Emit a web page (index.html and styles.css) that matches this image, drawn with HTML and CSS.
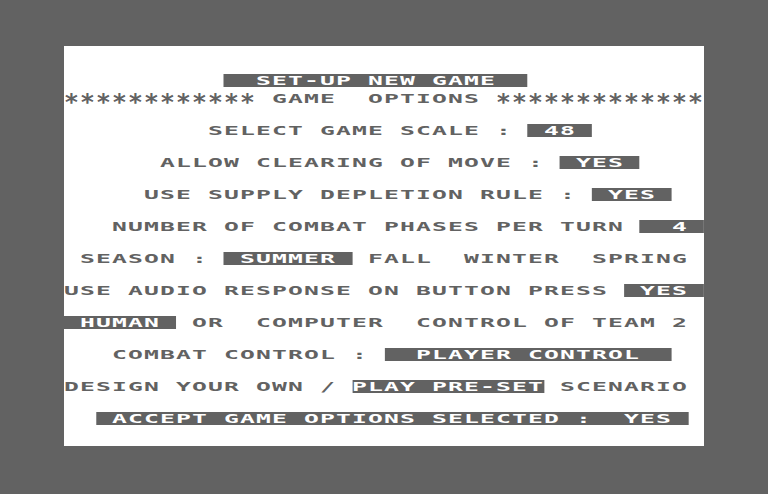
FILE: index.html
```html
<!DOCTYPE html>
<html>
<head>
<meta charset="utf-8">
<title>Set-up New Game</title>
<link rel="stylesheet" href="styles.css">
</head>
<body>
<div class="screen">
  <div class="row row-title"><span class="line">          <span class="inv">  SET-UP NEW GAME  </span></span></div>
  <div class="row"><span class="line"><span class="stars">************</span> GAME  OPTIONS <span class="stars">*************</span></span></div>
  <div class="row"><span class="line">         SELECT GAME SCALE : <span class="inv"> 48 </span></span></div>
  <div class="row"><span class="line">      ALLOW CLEARING OF MOVE : <span class="inv"> YES </span></span></div>
  <div class="row"><span class="line">     USE SUPPLY DEPLETION RULE : <span class="inv"> YES </span></span></div>
  <div class="row"><span class="line">   NUMBER OF COMBAT PHASES PER TURN <span class="inv">  4 </span></span></div>
  <div class="row"><span class="line"> SEASON : <span class="inv"> SUMMER </span> FALL  WINTER  SPRING </span></div>
  <div class="row"><span class="line">USE AUDIO RESPONSE ON BUTTON PRESS <span class="inv"> YES </span></span></div>
  <div class="row"><span class="line"><span class="inv"> HUMAN </span> OR  COMPUTER  CONTROL OF TEAM 2 </span></div>
  <div class="row"><span class="line">   COMBAT CONTROL : <span class="inv">  PLAYER CONTROL  </span></span></div>
  <div class="row"><span class="line">DESIGN YOUR OWN / <span class="inv">PLAY PRE-SET</span> SCENARIO </span></div>
  <div class="row"><span class="line">  <span class="inv"> ACCEPT GAME OPTIONS SELECTED :  YES </span></span></div>
</div>
</body>
</html>
```

FILE: styles.css
```css
html, body {
  margin: 0;
  padding: 0;
  background: #626262;
  width: 768px;
  height: 494px;
  overflow: hidden;
}

.screen {
  margin: 46px 0 0 64px;
  width: 640px;
  height: 400px;
  background: #ffffff;
  box-sizing: border-box;
  padding-top: 28px;
  display: flex;
  flex-direction: column;
}

.row {
  height: 32px;
  flex: none;
  font-family: "DejaVu Sans Mono", "Liberation Mono", monospace;
  font-weight: bold;
  font-size: 13px;
  line-height: 13px;
  color: #626262;
  white-space: pre;
}

.row-title {
  height: 18px;
}

.line {
  display: inline-block;
  height: 13px;
  letter-spacing: 0.6px;
  transform: scaleX(1.8987);
  transform-origin: 0 0;
}

.inv {
  display: inline-block;
  height: 13px;
  background: #626262;
  color: #ffffff;
  vertical-align: top;
}

.stars {
  display: inline-block;
  height: 13px;
  vertical-align: top;
  transform: scaleY(1.75);
  transform-origin: 0 1.5px;
}
```
